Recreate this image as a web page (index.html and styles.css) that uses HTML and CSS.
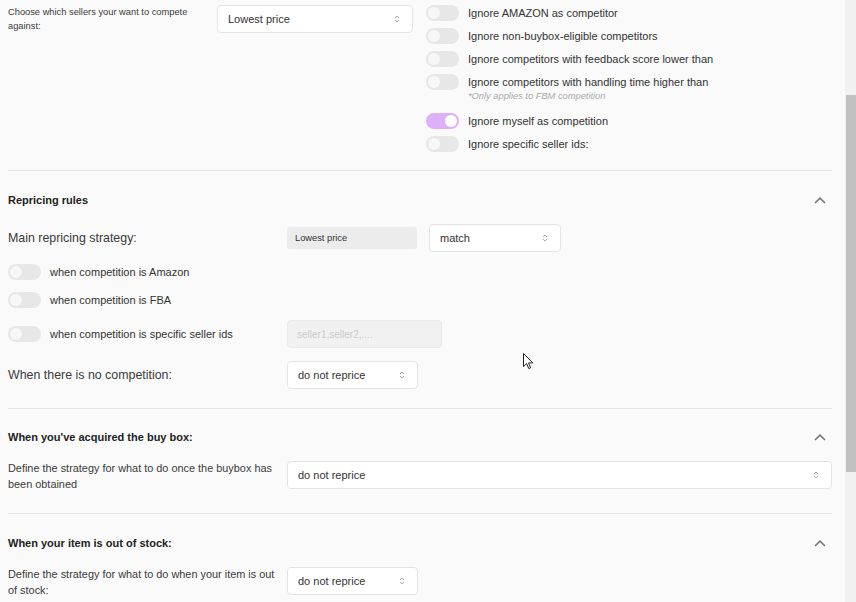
FILE: index.html
```html
<!DOCTYPE html>
<html lang="en">
<head>
<meta charset="utf-8">
<title>Repricer settings</title>
<link rel="stylesheet" href="styles.css">
</head>
<body>
<div class="page">
  <main class="content">
    <section class="sec sec-top">
      <div class="top-label">Choose which sellers your want to compete against:</div>
      <div class="select sel-top"><span>Lowest price</span><svg class="arr" width="6" height="10" viewBox="0 0 6 10"><path d="M1 4 L3 2 L5 4 M1 6 L3 8 L5 6" fill="none" stroke="#aaa" stroke-width="1"/></svg></div>
      <ul class="toggle-list">
        <li class="trow"><span class="tg"></span><span>Ignore AMAZON as competitor</span></li>
        <li class="trow"><span class="tg"></span><span>Ignore non-buybox-eligible competitors</span></li>
        <li class="trow"><span class="tg"></span><span>Ignore competitors with feedback score lower than</span></li>
        <li class="titem">
          <div class="trow"><span class="tg"></span><span>Ignore competitors with handling time higher than</span></div>
          <div class="note">*Only applies to FBM competition</div>
        </li>
        <li class="trow"><span class="tg on"></span><span>Ignore myself as competition</span></li>
        <li class="trow"><span class="tg"></span><span>Ignore specific seller ids:</span></li>
      </ul>
    </section>

    <section class="sec sec-rules">
      <div class="sec-head"><span>Repricing rules</span><svg class="chev" width="12" height="7" viewBox="0 0 12 7"><path d="M1 6 L6 1.2 L11 6" fill="none" stroke="#777" stroke-width="1.6"/></svg></div>
      <div class="row row-main">
        <div class="lbl lbl-big">Main repricing strategy:</div>
        <div class="grey-box">Lowest price</div>
        <div class="select sel-match"><span>match</span><svg class="arr" width="6" height="10" viewBox="0 0 6 10"><path d="M1 4 L3 2 L5 4 M1 6 L3 8 L5 6" fill="none" stroke="#aaa" stroke-width="1"/></svg></div>
      </div>
      <div class="trow rule-toggle"><span class="tg"></span><span>when competition is Amazon</span></div>
      <div class="trow rule-toggle"><span class="tg"></span><span>when competition is FBA</span></div>
      <div class="row row-ids">
        <div class="lbl trow"><span class="tg"></span><span>when competition is specific seller ids</span></div>
        <div class="ids-input">seller1,seller2,....</div>
      </div>
      <div class="row row-nocomp">
        <div class="lbl lbl-big">When there is no competition:</div>
        <div class="select sel-small"><span>do not reprice</span><svg class="arr" width="6" height="10" viewBox="0 0 6 10"><path d="M1 4 L3 2 L5 4 M1 6 L3 8 L5 6" fill="none" stroke="#aaa" stroke-width="1"/></svg></div>
      </div>
    </section>

    <section class="sec sec-buybox">
      <div class="sec-head"><span>When you've acquired the buy box:</span><svg class="chev" width="12" height="7" viewBox="0 0 12 7"><path d="M1 6 L6 1.2 L11 6" fill="none" stroke="#777" stroke-width="1.6"/></svg></div>
      <div class="row row-def">
        <div class="lbl lbl-def">Define the strategy for what to do once the buybox has been obtained</div>
        <div class="select sel-wide"><span>do not reprice</span><svg class="arr" width="6" height="10" viewBox="0 0 6 10"><path d="M1 4 L3 2 L5 4 M1 6 L3 8 L5 6" fill="none" stroke="#aaa" stroke-width="1"/></svg></div>
      </div>
    </section>

    <section class="sec sec-stock">
      <div class="sec-head"><span>When your item is out of stock:</span><svg class="chev" width="12" height="7" viewBox="0 0 12 7"><path d="M1 6 L6 1.2 L11 6" fill="none" stroke="#777" stroke-width="1.6"/></svg></div>
      <div class="row row-def">
        <div class="lbl lbl-def">Define the strategy for what to do when your item is out of stock:</div>
        <div class="select sel-small"><span>do not reprice</span><svg class="arr" width="6" height="10" viewBox="0 0 6 10"><path d="M1 4 L3 2 L5 4 M1 6 L3 8 L5 6" fill="none" stroke="#aaa" stroke-width="1"/></svg></div>
      </div>
    </section>
  </main>
  <div class="scrollbar"><div class="thumb"></div></div>
</div>
<svg class="cursor" width="11" height="17" viewBox="0 0 11 17"><path d="M0.5 0.5 L0.5 13.5 L3.6 10.6 L5.8 15.6 L7.6 14.8 L5.5 9.9 L9.8 9.9 Z" fill="#fff" stroke="#222" stroke-width="1"/></svg>
</body>
</html>
```

FILE: styles.css
```css
* { box-sizing: border-box; }

html, body {
  margin: 0;
  padding: 0;
}

body {
  width: 856px;
  height: 602px;
  overflow: hidden;
  background: #fafafa;
  font-family: "Liberation Sans", Arial, sans-serif;
  color: #333;
  position: relative;
}

.page {
  display: flex;
  height: 602px;
}

.content {
  width: 845px;
  padding: 0 13px 0 8px;
}

.sec {
  border-bottom: 1px solid #e6e6e6;
}

.sec:last-child {
  border-bottom: none;
}

/* top section */
.sec-top {
  display: flex;
  align-items: flex-start;
  padding: 5px 0 18px 0;
}

.top-label {
  width: 209px;
  font-size: 9.3px;
  line-height: 14px;
  color: #3a3a3a;
}

.select {
  display: flex;
  align-items: center;
  justify-content: space-between;
  height: 28px;
  padding: 0 12px 0 10px;
  background: #fff;
  border: 1px solid #e4e4e4;
  border-radius: 4px;
  font-size: 11px;
  color: #333;
}

.sel-top { width: 196px; }
.sel-match { width: 132px; }
.sel-small { width: 131px; }
.sel-wide { flex: 1; }

.arr { display: block; }

.toggle-list {
  list-style: none;
  margin: 0 0 0 13px;
  padding: 0;
  display: flex;
  flex-direction: column;
  gap: 7px;
}

.trow {
  display: flex;
  align-items: center;
  gap: 9px;
  height: 16px;
  font-size: 11px;
  color: #333;
  white-space: nowrap;
}

.tg {
  position: relative;
  flex: none;
  width: 33px;
  height: 16px;
  border-radius: 8px;
  background: #e7e7e7;
}

.tg::after {
  content: "";
  position: absolute;
  top: 2px;
  left: 2px;
  width: 12px;
  height: 12px;
  border-radius: 50%;
  background: #f7f7f7;
}

.tg.on { background: #deb0f7; }
.tg.on::after { left: 19px; background: #fff; }

.note {
  margin: 1px 0 4px 42px;
  font-size: 9.3px;
  line-height: 11px;
  font-style: italic;
  color: #aaa;
}

/* section heads */
.sec-head {
  display: flex;
  align-items: center;
  justify-content: space-between;
  height: 16px;
  padding-right: 6px;
  font-size: 11px;
  font-weight: bold;
  color: #222;
}

.chev { display: block; }

/* repricing rules */
.sec-rules {
  padding: 21px 0 19px 0;
}

.row {
  display: flex;
  align-items: center;
}

.lbl {
  width: 279px;
  flex: none;
}

.lbl-big {
  font-size: 12.4px;
  color: #3a3a3a;
}

.row-main {
  margin-top: 16px;
  height: 28px;
}

.grey-box {
  width: 130px;
  height: 22px;
  margin-right: 12px;
  padding-left: 8px;
  display: flex;
  align-items: center;
  background: #ececec;
  border-radius: 3px;
  font-size: 9.3px;
  color: #333;
}

.rule-toggle {
  margin-top: 12px;
}

.row-ids {
  margin-top: 12px;
  height: 28px;
}

.ids-input {
  width: 155px;
  height: 28px;
  padding-left: 9px;
  display: flex;
  align-items: center;
  background: #f1f1f1;
  border: 1px solid #e9e9e9;
  border-radius: 4px;
  font-size: 10px;
  color: #cacaca;
}

.row-nocomp {
  margin-top: 13px;
  height: 28px;
}

/* buybox & stock */
.sec-buybox {
  padding: 20px 0 21px 0;
}

.sec-stock {
  padding: 21px 0 0 0;
}

.row-def {
  margin-top: 15px;
  align-items: flex-start;
}

.lbl-def {
  padding-right: 10px;
  font-size: 10.9px;
  line-height: 16px;
  color: #3a3a3a;
}

.row-def .select {
  margin-top: 1px;
}

/* scrollbar */
.scrollbar {
  width: 11px;
  height: 602px;
  background: #f1f1f1;
  padding: 95px 0 0 1px;
}

.thumb {
  height: 377px;
  background: #c1c1c1;
}

.cursor {
  position: absolute;
  left: 523px;
  top: 353px;
}
```
